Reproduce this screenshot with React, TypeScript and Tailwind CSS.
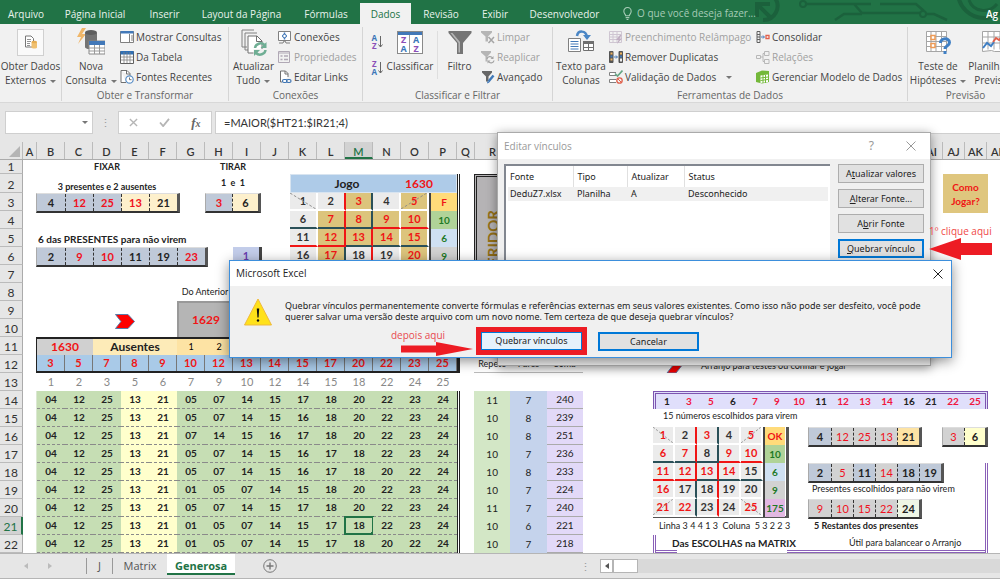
import type { ReactNode } from "react";
import clsx from "clsx";

const ui = "font-['Open_Sans','Noto_Sans',sans-serif]";
const dialogFont = "font-['Noto_Sans','Open_Sans',sans-serif]";
const calibri = "font-[Lato,'Noto_Sans',sans-serif]";

const tabs = [
  { label: "Arquivo", width: "w-[52px]" },
  { label: "Página Inicial", width: "w-[86px]" },
  { label: "Inserir", width: "w-[53px]" },
  { label: "Layout da Página", width: "w-[101px]" },
  { label: "Fórmulas", width: "w-[68px]" },
  { label: "Dados", width: "w-[51px]", active: true },
  { label: "Revisão", width: "w-[60px]" },
  { label: "Exibir", width: "w-[48px]" },
  { label: "Desenvolvedor", width: "w-[91px]" },
];

const leftColumns = "BCDEFGHIJKLMNOP".split("");
const rightColumns = ["AI", "AJ", "AK", "AL"];
const rowNumbers = Array.from({ length: 22 }, (_, i) => i + 1);

const drawn = [3, 5, 7, 8, 9, 10, 12, 13, 14, 15, 17, 20, 22, 23, 25];
const positions = [1, 2, 3, 5, 6, 7, 9, 10, 12, 14, 15, 18, 22, 24, 25];
const chosen = [1, 3, 5, 6, 7, 9, 10, 11, 12, 13, 14, 16, 21, 22, 25];
const firstColumn = [1, 6, 11, 16, 21];

const games = [
  "04 12 25 13 21 05 07 14 15 17 18 20 22 23 24",
  "04 12 25 13 21 05 07 14 15 16 18 20 22 23 24",
  "04 12 25 13 21 07 14 15 16 17 18 20 22 23 24",
  "04 12 25 13 21 05 07 14 15 16 17 18 22 23 24",
  "04 12 25 13 21 05 07 14 15 16 17 18 20 22 24",
  "04 12 25 13 21 01 05 07 14 15 18 20 22 23 24",
  "04 12 25 13 21 05 07 14 15 17 18 20 22 23 24",
  "04 12 25 13 21 01 05 07 14 15 17 18 22 23 24",
  "04 12 25 13 21 01 05 07 14 15 17 18 20 22 24",
].map((line) => line.split(" "));

const sums = [
  [11, 7, 240],
  [10, 8, 239],
  [10, 8, 251],
  [10, 7, 236],
  [10, 8, 233],
  [10, 7, 224],
  [11, 7, 240],
  [10, 6, 221],
  [10, 7, 218],
];

/* ---------- ribbon icons ---------- */

function IconSvg({ size, children }: { size: "sm" | "lg"; children: ReactNode }) {
  return size === "sm" ? (
    <svg viewBox="0 0 14 14" className="h-[14px] w-[14px] shrink-0" fill="none" aria-hidden="true">
      {children}
    </svg>
  ) : (
    <svg viewBox="0 0 28 28" className="h-7 w-7 shrink-0" fill="none" aria-hidden="true">
      {children}
    </svg>
  );
}

const ExternalIcon = () => (
  <span className="flex h-[27px] w-[27px] items-center justify-center border border-[#d0d0d0] bg-[#fafafa]">
    <svg viewBox="0 0 14 14" className="h-[14px] w-[14px]" fill="none" aria-hidden="true">
      <path d="M1.500 1h5.500l2.500 2.500V12h-8z" fill="#fff" stroke="#777" />
      <path d="M3 4.500h4M3 6.500h4M3 8.500h3M3 10.500h3" stroke="#777" strokeWidth=".8" />
      <path d="M7.500 7v5.500c0 1.300 5.500 1.300 5.500 0V7z" fill="#f0c070" />
      <ellipse cx="10.250" cy="7" rx="2.750" ry="1.200" fill="#e6ad52" />
    </svg>
  </span>
);

const QueryIcon = () => (
  <IconSvg size="lg">
    <path d="M5 0L0 9h4L1 16 9 6H5l4-6z" fill="#f0b76a" />
    <path d="M8 5v14c0 3 12 3 12 0V5z" fill="#737373" />
    <ellipse cx="14" cy="4.500" rx="6" ry="2.500" fill="#5e5e5e" />
    <path d="M12 13h16v13H12z" fill="#fff" stroke="#888" />
    <path d="M12 13h16v4H12z" fill="#4278b8" />
    <path d="M17.500 17v9M22.500 17v9M12 20h16M12 23h16" stroke="#999" />
  </IconSvg>
);

const ShowQueriesIcon = () => (
  <IconSvg size="sm">
    <path d="M.5 1.500h13v11H.5z" fill="#fff" stroke="#808080" />
    <path d="M.5 1h13v2.500H.5z" fill="#4278b8" />
    <path d="M9.500 4v8.500M11 6h2M11 8h2M11 10h2" stroke="#808080" />
  </IconSvg>
);

const TableIcon = () => (
  <IconSvg size="sm">
    <path d="M.5 1.500h13v12H.5z" fill="#fff" stroke="#606060" />
    <path d="M.5 1h13v3.500H.5z" fill="#2f6fb5" />
    <path d="M4 2v11M7 2v11M10 2v11M1 7h12M1 10h12" stroke="#808080" strokeWidth=".8" />
  </IconSvg>
);

const RecentIcon = () => (
  <IconSvg size="sm">
    <path d="M1 .5h6L10 3.500V6M6 12.500H1V.5" stroke="#707070" fill="#fff" />
    <path d="M6.500.5V4H10" stroke="#707070" />
    <circle cx="9.500" cy="9.500" r="3.700" fill="#fff" stroke="#5b8fc7" strokeWidth="1.200" />
    <path d="M9.500 7.500v2.200h2" stroke="#707070" />
  </IconSvg>
);

const RefreshAllIcon = () => (
  <IconSvg size="lg">
    <path d="M7 19H2V2h12M10 22H5V5h12" stroke="#808080" />
    <path d="M8 8h9l5 5v12H8z" fill="#fff" stroke="#707070" />
    <path d="M16.500 8v5.500H22" stroke="#707070" />
    <path d="M13.500 21h11v7h-11z" fill="#f1f1f1" />
    <path d="M15 20a5.500 5 0 0 1 9.500-3M25.500 22a5.500 5 0 0 1-9.500 3" stroke="#6fae94" strokeWidth="2.500" />
    <path d="M26.500 14v6h-6zM14 28v-6h6z" fill="#6fae94" />
  </IconSvg>
);

const ConnectionsIcon = () => (
  <IconSvg size="sm">
    <path d="M.5 1.500h12v9H.5z" fill="#fff" stroke="#808080" />
    <path d="M1 13h4l1-2h1l1 2h4" stroke="#808080" />
    <path d="M6.500 2.500v7M4 6h5" stroke="#4278b8" strokeWidth="1.500" />
    <circle cx="6.500" cy="6" r="1.800" fill="#fff" stroke="#4278b8" />
  </IconSvg>
);

const PropertiesIcon = () => (
  <IconSvg size="sm">
    <path d="M.5 1.500h11v11H.5z" stroke="#b0a8b5" />
    <path d="M.5 3h11" stroke="#b0a8b5" />
    <path d="M2.500 6h2M2.500 9.500h2M6 6h4M6 9.500h4" stroke="#b0a8b5" strokeWidth="1.500" />
  </IconSvg>
);

const EditLinksIcon = () => (
  <IconSvg size="sm">
    <path d="M4 12H2.500V1h5L10 3.500V7" stroke="#707070" fill="#fff" />
    <path d="M7 1v3h3" stroke="#707070" />
    <rect x="4.500" y="9.500" width="4.500" height="3" rx="1.500" stroke="#3f75b3" strokeWidth="1.200" fill="#fff" />
    <rect x="8.500" y="9.500" width="4.500" height="3" rx="1.500" stroke="#3f75b3" strokeWidth="1.200" />
  </IconSvg>
);

function SortIcon({ top, bottom, topColor, bottomColor }: { top: string; bottom: string; topColor: string; bottomColor: string }) {
  return (
    <span className="flex items-center gap-px">
      <span className="flex flex-col text-[8px] font-bold leading-[8px]">
        <span className={topColor}>{top}</span>
        <span className={bottomColor}>{bottom}</span>
      </span>
      <svg viewBox="0 0 5 14" className="h-[14px] w-[5px]" fill="none" aria-hidden="true">
        <path d="M2.500 1v11M.5 9.500l2 2.500 2-2.500" stroke="#666" />
      </svg>
    </span>
  );
}

const SortBigIcon = () => (
  <span className="flex h-7 items-center">
    <span className="flex h-[23px] w-[26px] flex-col border border-[#8a8a8a] bg-white">
      <span className="h-[3px] bg-[#4278b8]" />
      <span className="grid flex-1 grid-cols-2 items-center text-center text-[9px] font-bold leading-[9px]">
        <span className="border-r border-[#999] text-[#8b4fb8]">Z</span>
        <span className="text-[#3a76b8]">A</span>
        <span className="border-r border-[#999] text-[#3a76b8]">A</span>
        <span className="text-[#8b4fb8]">Z</span>
      </span>
    </span>
  </span>
);

const FilterIcon = () => (
  <IconSvg size="lg">
    <path d="M2.500 3h23v2L17 15v11h-6V15L2.500 5z" fill="#757575" />
    <path d="M12.500 15v9.500h1.500V14L6.500 5H4.500z" fill="#b5b5b5" />
  </IconSvg>
);

const ClearIcon = () => (
  <IconSvg size="sm">
    <path d="M0 1h11v1.500L7 6.500v5H4.500v-5L0 2.500z" fill="#b5b5b5" />
    <path d="M7.500 7l5.500 6M13 7l-5.500 6" stroke="#a5a5a5" strokeWidth="1.500" />
  </IconSvg>
);

const ReapplyIcon = () => (
  <IconSvg size="sm">
    <path d="M0 1h10v1.500L6.500 6.500v5H4.500v-5L0 2.500z" fill="#b5b5b5" />
    <path d="M6 9a3 3 0 0 1 5.500-1M13 10.500a3 3 0 0 1-5.500 1" stroke="#a5a5a5" strokeWidth="1.300" />
    <path d="M12.500 6v3h-3zM6.500 13.500v-3h3z" fill="#a5a5a5" />
  </IconSvg>
);

const AdvancedIcon = () => (
  <IconSvg size="sm">
    <path d="M1 1h10v1.500L7.500 6.500v5H5v-5L1 2.500z" fill="#666" />
    <path d="M12.500 5.500l-5 6" stroke="#3f78b8" strokeWidth="2.500" />
    <path d="M6 13.500l.5-2.500 2 1.500z" fill="#3f78b8" />
  </IconSvg>
);

const TextColumnsIcon = () => (
  <IconSvg size="lg">
    <path d="M1.500 10.500h12v13h-12z" fill="#fff" stroke="#808080" />
    <path d="M3.500 13.500h8M3.500 16h8M3.500 18.500h8M3.500 21h8" stroke="#4278b8" />
    <path d="M16.500 13.500h10v9h-10z" fill="#fff" stroke="#707070" />
    <path d="M16 13h11v3H16z" fill="#707070" />
    <path d="M21.500 16v6.500M16 19.500h11" stroke="#707070" />
    <path d="M10 8c1-6 9-6 10 1" stroke="#4a86c5" strokeWidth="2.500" />
    <path d="M16 7h8l-4 5z" fill="#4a86c5" />
  </IconSvg>
);

const FlashFillIcon = () => (
  <IconSvg size="sm">
    <path d="M.5 1.500h12v11H.5zM1 4.500h11M1 7h11M1 9.500h11M4 2v10M8 2v10" stroke="#cfc6d2" />
    <path d="M11 5L7 10h2.500L8 14l5-5.500h-2.500l2-3.500z" fill="#bfaec1" />
  </IconSvg>
);

const DuplicatesIcon = () => (
  <IconSvg size="sm">
    <path d="M.5 1.500h3.500v11H.5z" fill="#555" stroke="#555" />
    <path d="M1.500 2.500h2v2h-2zM1.500 8.500h2v2h-2z" fill="#f0b25e" />
    <path d="M1.500 5.500h2v2h-2z" fill="#4278b8" />
    <path d="M5 7h3M7 5.500L8.500 7 7 8.500" stroke="#4278b8" />
    <path d="M10 1.500h3.500v11H10z" fill="#555" stroke="#555" />
    <path d="M11 2.500h2v2h-2z" fill="#f0b25e" />
    <path d="M11 5.500h2v2h-2z" fill="#4278b8" />
    <path d="M11 8.500h2v3h-2z" fill="#eee" />
  </IconSvg>
);

const ValidationIcon = () => (
  <IconSvg size="sm">
    <path d="M7 2.500H.5v3H7M7 9.500H.5v3H7" stroke="#808080" fill="#fff" />
    <path d="M6 3.500L8.500 6 13.500.5" stroke="#64a584" strokeWidth="1.600" />
    <circle cx="10.500" cy="10.500" r="2.700" stroke="#e0604c" strokeWidth="1.300" />
    <path d="M8.800 8.800l3.500 3.500" stroke="#e0604c" />
  </IconSvg>
);

const ConsolidateIcon = () => (
  <IconSvg size="sm">
    <path d="M1 1.500h3v11H1zM1 4.500h3M1 7h3M1 9.500h3" stroke="#606060" />
    <path d="M5 7h3M7 5.500L8.500 7 7 8.500" stroke="#4278b8" />
    <path d="M10 5.500h3v3h-3z" fill="#fff" stroke="#e0604c" strokeWidth="1.300" />
  </IconSvg>
);

const RelationsIcon = () => (
  <IconSvg size="sm">
    <path d="M.5 5.500h4v3h-4zM8.500 1.500h4.500v4H8.500zM8.500 9.500h4.500v4H8.500zM4.500 7h2.500M8.500 3.500H7v8h1.500" stroke="#b8b8b8" />
  </IconSvg>
);

const ModelIcon = () => (
  <IconSvg size="sm">
    <path d="M0 3l6-2.500L13 1v11l-7 1.500L0 12z" fill="#74b83a" />
    <path d="M4.500 5.500L12 4.500v7.500l-7.500 1z" fill="#fff" />
    <path d="M7 5v8M9.500 5v8M4.500 8l7.500-1M4.500 10.500l7.500-1" stroke="#74b83a" />
  </IconSvg>
);

const WhatIfIcon = () => (
  <IconSvg size="lg">
    <path d="M2.500 3.500h20v20h-20zM7 3.500v20M12 3.500v20M17.500 3.500v20M2.500 8.500h20M2.500 13.500h20M2.500 18.500h20" stroke="#a5a5a5" fill="#fff" />
    <path d="M7 7.500h4v4H7zM7 15.500h4v4H7z" stroke="#ee9b56" fill="#fff" strokeWidth="1.500" />
    <path d="M16.500 15c0-5.500 9-5.500 9-.5 0 3.500-4.500 3-4.500 6.500" stroke="#3f7fc4" strokeWidth="3" />
    <path d="M19.500 23h3v3h-3z" fill="#3f7fc4" />
  </IconSvg>
);

const ForecastIcon = () => (
  <IconSvg size="lg">
    <path d="M2.500 3.500h24v17l-4 3h-8l-3-1-9 1zM8 3.500v18M14 3.500v18M20 3.500v18M2.500 9h24M2.500 15h24" stroke="#a5a5a5" fill="#fff" />
    <path d="M3 20l4-5 4 3 3-4" stroke="#3f7fc4" strokeWidth="2" />
    <path d="M13 14l3-4 3 2 7-7" stroke="#e0604c" strokeWidth="2" />
  </IconSvg>
);

/* ---------- ribbon ---------- */

const Caret = () => <span className="ml-1 inline-block border-x-[3px] border-t-[3px] border-x-transparent border-t-[#777] align-middle" />;

function BigButton({ icon, lines, menu, width }: { icon: ReactNode; lines: string[]; menu?: boolean; width: string }) {
  return (
    <button type="button" className={clsx("flex shrink-0 flex-col items-center whitespace-nowrap", width)}>
      <span className="mb-0.5 flex h-[30px] items-center">{icon}</span>
      {lines.map((line, i) => (
        <span key={line} className="block leading-[14px]">
          {line}
          {menu && i === lines.length - 1 && <Caret />}
        </span>
      ))}
    </button>
  );
}

function SmallButton({ icon, label, disabled, menu }: { icon: ReactNode; label: string; disabled?: boolean; menu?: boolean }) {
  return (
    <button
      type="button"
      disabled={disabled}
      className={clsx("flex h-5 items-center gap-0.5 whitespace-nowrap", disabled && "text-[#a0a0a0]")}
    >
      {icon}
      {label}
      {menu && <span className="ml-1"><Caret /></span>}
    </button>
  );
}

function Group({ label, width, children }: { label?: string; width: string; children: ReactNode }) {
  return (
    <div className={clsx("flex h-[74px] shrink-0 flex-col justify-between border-r border-[#d5d5d5]", width)}>
      <div className="flex h-[61px] items-start">{children}</div>
      <div className="h-3 text-center leading-3 text-[#666]">{label}</div>
    </div>
  );
}

function Ribbon() {
  return (
    <div className="flex h-[79px] overflow-hidden border-b border-[#d8d8d8] bg-[#f1f1f1] pt-[3px] text-[10px] text-[#444]">
      <Group width="w-[62px]">
        <BigButton width="w-full" icon={<ExternalIcon />} lines={["Obter Dados", "Externos"]} menu />
      </Group>
      <Group width="w-[167px]" label="Obter e Transformar">
        <BigButton width="w-[58px]" icon={<QueryIcon />} lines={["Nova", "Consulta"]} menu />
        <div className="flex flex-col">
          <SmallButton icon={<ShowQueriesIcon />} label="Mostrar Consultas" />
          <SmallButton icon={<TableIcon />} label="Da Tabela" />
          <SmallButton icon={<RecentIcon />} label="Fontes Recentes" />
        </div>
      </Group>
      <Group width="w-[134px]" label="Conexões">
        <BigButton width="w-[49px]" icon={<RefreshAllIcon />} lines={["Atualizar", "Tudo"]} menu />
        <div className="flex flex-col">
          <SmallButton icon={<ConnectionsIcon />} label="Conexões" />
          <SmallButton icon={<PropertiesIcon />} label="Propriedades" disabled />
          <SmallButton icon={<EditLinksIcon />} label="Editar Links" />
        </div>
      </Group>
      <Group width="w-[190px]" label="Classificar e Filtrar">
        <div className="flex w-5 flex-col items-end gap-2.5 pt-[7px]">
          <button type="button" aria-label="Classificar de A a Z">
            <SortIcon top="A" bottom="Z" topColor="text-[#3a76b8]" bottomColor="text-[#8b4fb8]" />
          </button>
          <button type="button" aria-label="Classificar de Z a A">
            <SortIcon top="Z" bottom="A" topColor="text-[#8b4fb8]" bottomColor="text-[#3a76b8]" />
          </button>
        </div>
        <BigButton width="w-[54px]" icon={<SortBigIcon />} lines={["Classificar"]} />
        <span className="mt-1 h-12 border-l border-[#dedede]" />
        <BigButton width="w-[43px]" icon={<FilterIcon />} lines={["Filtro"]} />
        <div className="flex flex-col">
          <SmallButton icon={<ClearIcon />} label="Limpar" disabled />
          <SmallButton icon={<ReapplyIcon />} label="Reaplicar" disabled />
          <SmallButton icon={<AdvancedIcon />} label="Avançado" />
        </div>
      </Group>
      <Group width="w-[355px]" label="Ferramentas de Dados">
        <BigButton width="w-[56px]" icon={<TextColumnsIcon />} lines={["Texto para", "Colunas"]} />
        <div className="flex w-[147px] flex-col">
          <SmallButton icon={<FlashFillIcon />} label="Preenchimento Relâmpago" disabled />
          <SmallButton icon={<DuplicatesIcon />} label="Remover Duplicatas" />
          <SmallButton icon={<ValidationIcon />} label="Validação de Dados" menu />
        </div>
        <div className="flex flex-col">
          <SmallButton icon={<ConsolidateIcon />} label="Consolidar" />
          <SmallButton icon={<RelationsIcon />} label="Relações" disabled />
          <SmallButton icon={<ModelIcon />} label="Gerenciar Modelo de Dados" />
        </div>
      </Group>
      <Group width="w-[116px]" label="Previsão">
        <BigButton width="w-[60px]" icon={<WhatIfIcon />} lines={["Teste de", "Hipóteses"]} menu />
        <BigButton width="w-[52px]" icon={<ForecastIcon />} lines={["Planilha de", "Previsão"]} />
      </Group>
    </div>
  );
}

function TitleTabs() {
  return (
    <header className="relative flex h-6 items-end overflow-hidden bg-[#217346] text-[10px] text-[#e8f2ec]">
      <svg viewBox="0 0 245 24" className="absolute right-0 top-0 h-6 w-[245px]" fill="none" stroke="#1b613c" aria-hidden="true">
        <path d="M8 20A14 14 0 0 0 20-2" strokeWidth="4" />
        <path d="M2 17V4h13M3 5l12 12" strokeWidth="4" />
        <circle cx="48" cy="4" r="3" strokeWidth="2" />
        <path d="M51 4h48l8 9h58M80 20l9-6h18M171 14h8l13 6M98 4h18M125 4h36l8 7" strokeWidth="2.500" />
        <circle cx="168" cy="14" r="3" strokeWidth="2" />
        <circle cx="229" cy="-8" r="26" strokeWidth="4" />
        <path d="M214 0c4 12 20 14 28 4" strokeWidth="3" />
      </svg>
      {tabs.map((tab) => (
        <button
          key={tab.label}
          type="button"
          className={clsx(
            "relative h-[21px] shrink-0 whitespace-nowrap text-center leading-[20px]",
            tab.width,
            tab.active && "bg-[#f1f1f1] text-[#217346]",
          )}
        >
          {tab.label}
        </button>
      ))}
      <label className="relative ml-3 flex h-[21px] shrink-0 items-center text-[#a6cbb6]">
        <svg viewBox="0 0 12 14" className="mr-1 h-[13px] w-[11px]" fill="none" stroke="#a6cbb6" aria-hidden="true">
          <path d="M4 9.500C4 8 2 7 2 4.500a4 4 0 0 1 8 0C10 7 8 8 8 9.500zM4 11.500h4M5 13.500h2" strokeWidth="1.200" />
        </svg>
        <input type="text" placeholder="O que você deseja fazer..." className="w-[120px] bg-transparent outline-none placeholder:text-[#a6cbb6]" />
      </label>
      <span className="relative ml-auto w-[14px] shrink-0 overflow-hidden whitespace-nowrap text-[10px] font-semibold leading-[20px] text-white">Ag</span>
    </header>
  );
}

function FormulaBar() {
  return (
    <div className="flex items-center bg-[#e6e6e6] py-2 pl-[5px] text-[11px]">
      <label className="flex h-[23px] w-[88px] shrink-0 items-center border border-[#cfcfcf] bg-white pr-1">
        <input type="text" aria-label="Caixa de nome" className="w-0 flex-1 outline-none" />
        <Caret />
      </label>
      <span className="w-[25px] shrink-0 text-center leading-none text-[#999]">⋮</span>
      <div className="flex h-[23px] w-[94px] shrink-0 items-center justify-around border border-[#cfcfcf] bg-white">
        <button type="button" aria-label="Cancelar entrada">
          <svg viewBox="0 0 10 10" className="h-[9px] w-[9px]" stroke="#b5b5b5" strokeWidth="1.500"><path d="M1 1l8 8M9 1L1 9" /></svg>
        </button>
        <button type="button" aria-label="Confirmar entrada">
          <svg viewBox="0 0 12 10" className="h-[9px] w-[11px]" fill="none" stroke="#b5b5b5" strokeWidth="2"><path d="M1 5l3.500 4L11 1" /></svg>
        </button>
        <button type="button" className="font-['Liberation_Serif',serif] text-[13px] font-bold italic leading-none text-[#666]">
          f<span className="text-[10px]">x</span>
        </button>
      </div>
      <input
        type="text"
        aria-label="Barra de fórmulas"
        defaultValue="=MAIOR($HT21:$IR21;4)"
        className={clsx(calibri, "ml-[3px] h-[23px] min-w-0 flex-1 border border-r-0 border-[#cfcfcf] bg-white px-2 text-[11px] text-[#333] outline-none")}
      />
    </div>
  );
}

/* ---------- sheet ---------- */

function ColumnHead({ label, width, active }: { label: string; width: string; active?: boolean }) {
  return (
    <span
      className={clsx(
        "shrink-0 overflow-hidden border-r text-center",
        width,
        active ? "border-b-2 border-b-[#217346] border-r-[#bbb] bg-[#d2d2d2] text-[#217346]" : "border-[#bbb]",
      )}
    >
      {label}
    </span>
  );
}

function ColumnHeads() {
  return (
    <div className="flex h-[18px] overflow-hidden border-b border-[#ababab] bg-[#e6e6e6] text-[11px] font-semibold leading-[20px] text-[#333]">
      <span className="flex w-[23px] shrink-0 items-end justify-end border-r border-[#bbb] p-0.5">
        <svg viewBox="0 0 10 10" className="h-[11px] w-[11px]" aria-hidden="true"><path d="M10 0v10H0z" fill="#b5b5b5" /></svg>
      </span>
      <ColumnHead label="A" width="w-[14px]" />
      {leftColumns.map((label) => (
        <ColumnHead key={label} label={label} width="w-7" active={label === "M"} />
      ))}
      <ColumnHead label="Q" width="w-[18px]" />
      <ColumnHead label="R" width="w-9" />
      <span className="w-[410px] shrink-0" />
      {rightColumns.map((label) => (
        <ColumnHead key={label} label={label} width="w-[22px]" />
      ))}
    </div>
  );
}

function RowHeads() {
  return (
    <div className="flex w-[23px] shrink-0 flex-col bg-[#e6e6e6] text-center text-[12px] text-[#333]">
      {rowNumbers.map((n) => (
        <span
          key={n}
          className={clsx(
            "border-b border-b-[#bbb]",
            n === 1 ? "h-[14px] leading-[13px]" : n === 2 ? "h-[19px] leading-[21px]" : "h-[18px] leading-[19px]",
            n === 21 ? "border-r-2 border-r-[#217346] bg-[#d2d2d2] text-[#217346]" : "border-r border-r-[#ababab]",
          )}
        >
          {n}
        </span>
      ))}
    </div>
  );
}

type StripCell = [value: number, bg: string, red?: boolean];

function Strip({ cells, cellWidth, light }: { cells: StripCell[]; cellWidth: string; light?: boolean }) {
  return (
    <div className="flex h-5 shrink-0 border-b-2 border-l border-r-[3px] border-t border-b-[#333] border-l-[#aaa] border-r-[#555] border-t-[#ddd]">
      {cells.map(([value, bg, red], i) => (
        <span
          key={i}
          className={clsx(
            "text-center leading-[17px]",
            cellWidth,
            bg,
            red ? "text-[#f01020]" : "text-[#222]",
            red && light ? "font-normal" : "font-bold",
            i > 0 && "border-l border-dashed border-[#333]",
          )}
        >
          {value}
        </span>
      ))}
    </div>
  );
}

function Diagonal({ down }: { down: boolean }) {
  return (
    <svg viewBox="0 0 28 18" preserveAspectRatio="none" className="absolute inset-0 h-full w-full" aria-hidden="true">
      <path d={down ? "M0 0L28 18" : "M0 18L28 0"} stroke="#888" strokeDasharray="3 2" />
    </svg>
  );
}

function rightEdge(row: number, col: number) {
  if (col === 1) return row < 3 ? "border-r-[#f01515]" : "border-r-[#2a5058]";
  if (col === 2) return row < 2 ? "border-r-[#2a5058]" : "border-r-[#f01515]";
  return "border-r-white";
}

function bottomEdge(row: number, col: number) {
  if (row === 1) return col < 3 ? "border-b-[#2a5058]" : "border-b-[#f01515]";
  if (row === 2) return col < 2 ? "border-b-[#f01515]" : "border-b-[#2a5058]";
  return "border-b-white";
}

const sideColors = [
  "bg-[#ffdb7a] text-[#f01515]",
  "bg-[#b0d398] text-[#1e7a26]",
  "bg-[#cfe0f2] text-[#1e7a26]",
  "bg-[#d2d2d2] text-[#1e7a26]",
  "bg-[#e2b8e2] text-[#1e7a26]",
];

function Matrix({ marked, side, cellWidth, filled }: { marked: number[]; side: string[]; cellWidth: string; filled?: boolean }) {
  return (
    <table className="table-fixed border-separate border-spacing-0 text-center font-bold">
      <tbody>
        {side.map((label, row) => (
          <tr key={row} className="h-[18px]">
            {[0, 1, 2, 3, 4].map((col) => {
              const value = row * 5 + col + 1;
              const hit = marked.includes(value);
              const corner = (row === 0 || row === 4) && (col === 0 || col === 4);
              return (
                <td
                  key={col}
                  className={clsx(
                    "relative border-b-2 border-r-2 p-0 leading-4",
                    cellWidth,
                    rightEdge(row, col),
                    bottomEdge(row, col),
                    hit ? "text-[#f01515]" : "text-[#333]",
                    hit && filled ? "bg-[#dcc47c]" : "bg-[#ebebeb]",
                  )}
                >
                  {value}
                  {corner && <Diagonal down={(row === 0) === (col === 0)} />}
                </td>
              );
            })}
            <td className={clsx("border-l-2 border-l-[#444] p-0 text-[10px] leading-4", cellWidth, sideColors[row])}>{label}</td>
          </tr>
        ))}
      </tbody>
    </table>
  );
}

const slate = "bg-[#bfc9d8]";
const cream = "bg-[#fdf0cc]";
const silver = "bg-[#d2d2d2]";

function LeftSheet() {
  return (
    <div className="ml-[13px] w-[424px] shrink-0">
      <div className="flex h-[177px]">
        <div className="w-[254px] shrink-0 text-[9px] font-bold text-[#222]">
          <div className="flex h-[14px] leading-[14px]">
            <span className="w-[142px] text-center">FIXAR</span>
            <span className="ml-[27px] w-14 text-center">TIRAR</span>
          </div>
          <div className="flex h-[19px]">
            <span className="w-[142px] text-center leading-[25px]">3 presentes e 2 ausentes</span>
            <span className="ml-[27px] w-14 whitespace-pre text-center leading-[18px]">1  e  1</span>
          </div>
          <div className="flex h-9 gap-[25px] text-[11px]">
            <Strip cellWidth="w-7" cells={[[4, slate], [12, slate, true], [25, slate, true], [13, cream, true], [21, cream]]} />
            <Strip cellWidth="w-[26px]" cells={[[3, slate, true], [6, cream]]} />
          </div>
          <div className="h-[18px] whitespace-nowrap pl-0.5 text-[10px] leading-[20px]">6 das PRESENTES para não virem</div>
          <div className="flex h-9 gap-[25px] text-[11px]">
            <Strip cellWidth="w-7" cells={[[2, slate], [9, slate, true], [10, slate, true], [11, slate], [19, slate], [23, slate, true]]} />
            <span className="h-5 w-[29px] border-b-2 border-r-[3px] border-[#444] bg-[#c3cdea] text-center leading-[17px] text-[#6a3db0]">1</span>
          </div>
          <div className="flex h-[18px]">
            <span className="ml-[141px] w-14 whitespace-nowrap text-center font-normal leading-[18px]">Do Anterior</span>
          </div>
          <div className="flex h-9 items-center">
            <svg viewBox="0 0 20 15" className="ml-[79px] mt-1 h-[15px] w-5" aria-hidden="true">
              <path d="M.5.5H13l6.500 7L13 14.500H.5L6 7.500z" fill="#f00" stroke="#5b7ba8" />
            </svg>
            <span className="ml-[42px] h-9 w-14 border-l-2 border-t-2 border-[#999] bg-[#b5b5b5] text-center text-[12px] leading-[34px] text-[#f01515]">
              1629
            </span>
          </div>
        </div>
        <div className="mt-[14px] h-[92px] w-[170px] border-r-[3px] border-double border-[#222] text-[11px]">
          <div className="flex h-[19px] border border-[#d8e4f0] bg-[#aecbe8] text-center text-[12px] font-bold leading-[18px]">
            <span className="w-28 text-[#222]">Jogo</span>
            <span className="w-8 text-[#f01515]">1630</span>
          </div>
          <Matrix marked={drawn} side={["F", "10", "6", "9"]} cellWidth="w-7" filled />
        </div>
      </div>

      <table className="table-fixed border-separate border-spacing-0 border-2 border-l border-r-[3px] border-[#222] text-center font-bold">
        <tbody>
          <tr className="h-4 text-[12px] leading-4">
            <td colSpan={2} className="bg-[#d0d0d0] p-0 text-[#f01515]">1630</td>
            <td colSpan={3} className="bg-[#fdebb8] p-0 text-[#222]">Ausentes</td>
            {[1, 2, 3, 4, 5, 6, 7, 8, 9, 10].map((n) => (
              <td key={n} className="w-7 bg-[#fde3a4] p-0 text-[9px] font-normal">{n}</td>
            ))}
          </tr>
          <tr className="h-4 text-[11px] leading-4">
            {drawn.map((n) => (
              <td key={n} className="w-7 border-r border-[#777] bg-[#a9cae8] p-0 text-[#f01515]">{n}</td>
            ))}
          </tr>
        </tbody>
      </table>
      <div className="flex h-[18px] pl-px text-[11px] leading-[18px] text-[#888]">
        {positions.map((n, i) => (
          <span key={i} className="w-7 text-center">{n}</span>
        ))}
      </div>
      <table className="table-fixed border-separate border-spacing-0 border-l border-r-[3px] border-double border-l-[#dbe8d2] border-r-[#222] text-center text-[10px] font-bold text-[#222]">
        <tbody>
          {games.map((game, row) => (
            <tr key={row} className="h-[18px] leading-[17px]">
              {game.map((n, col) => (
                <td
                  key={col}
                  className={clsx(
                    "relative w-7 border-b border-dashed border-[#8a8a8a] p-0",
                    col === 3 || col === 4 ? "bg-[#ffffcc]" : "bg-[#c6deb4]",
                  )}
                >
                  {n}
                  {row === 7 && col === 11 && (
                    <span className="absolute -inset-px border-2 border-[#217346]">
                      <span className="absolute -bottom-1 -right-1 h-[5px] w-[5px] bg-[#217346]" />
                    </span>
                  )}
                </td>
              ))}
            </tr>
          ))}
        </tbody>
      </table>
    </div>
  );
}

function MiddleSheet() {
  return (
    <div className="ml-[14px] w-[109px] shrink-0 pt-[14px] text-center">
      <div className="flex h-[181px] overflow-hidden border-l-[3px] border-t-[3px] border-double border-[#222] bg-[#b5b3b5] pl-2 pt-[33px] text-[15px] font-bold leading-4 text-[#947018]">
        <span className="rotate-180 self-start [writing-mode:vertical-rl]">CONFERIDOR</span>
      </div>
      <table className="w-full table-fixed border-separate border-spacing-0 text-[10px] text-[#222]">
        <thead>
          <tr className="h-[18px] text-[9px] leading-[17px]">
            {["Repete", "Pares", "Soma"].map((label) => (
              <th key={label} className="border-b border-[#bbb] p-0 font-normal">{label}</th>
            ))}
          </tr>
        </thead>
        <tbody>
          <tr className="h-[18px]"><td colSpan={3} className="p-0" /></tr>
          {sums.map(([repeat, even, sum], i) => (
            <tr key={i} className="h-[18px] leading-[17px]">
              <td className="bg-[#d3e7c6] p-0">{repeat}</td>
              <td className="bg-[#c5d3ec] p-0">{even}</td>
              <td className="border-b border-[#aaa] bg-[#e2d9f8] p-0">{sum}</td>
            </tr>
          ))}
        </tbody>
      </table>
    </div>
  );
}

function RightSheet() {
  return (
    <div className="ml-[70px] w-[335px] shrink-0 text-[11px] text-[#222]">
      <div className="flex h-[195px] items-start justify-end pt-[14px]">
        <button type="button" className="h-[39px] w-[45px] bg-[#dfc67e] text-center text-[10px] font-bold leading-[14px] text-[#f01515]">
          Como Jogar?
        </button>
      </div>
      <div className="flex h-[36px] items-start text-[9px]">
        <svg viewBox="0 0 18 18" className="ml-3 h-[18px] w-[18px]" aria-hidden="true">
          <path d="M2 18l7-9-7-9h9l7 9-7 9z" fill="#f00" stroke="#5b7ba8" />
        </svg>
        <span className="ml-[18px] leading-[22px]">Arranjo para testes ou confiar e jogar</span>
      </div>
      <div className="flex h-[18px] border-[3px] border-b-0 border-double border-[#7d55b0] bg-[#e0dffb] text-[10px] font-bold leading-[14px]">
        {chosen.map((n) => (
          <span key={n} className={clsx("w-[22px] shrink-0 text-center", firstColumn.includes(n) ? "text-[#222]" : "text-[#f01540]")}>
            {n}
          </span>
        ))}
      </div>
      <div className="h-[18px] pl-[10px] text-[9px] leading-[14px]">15 números escolhidos para virem</div>
      <div className="flex h-[90px]">
        <div className="h-[91px] w-[136px] shrink-0 border-b-2 border-r-[3px] border-[#555]">
          <Matrix marked={chosen} side={["OK", "10", "6", "9", "175"]} cellWidth="w-[22px]" />
        </div>
        <div className="ml-[19px] flex flex-1 flex-col">
          <div className="flex h-9 justify-between">
            <Strip light cellWidth="w-[22px]" cells={[[4, slate], [12, silver, true], [25, silver, true], [13, silver, true], [21, "bg-[#fde3a4]"]]} />
            <Strip light cellWidth="w-[21px]" cells={[[3, silver, true], [6, "bg-[#ffffcc]"]]} />
          </div>
          <div className="flex h-9 flex-col items-start border-r-[3px] border-double border-[#8a60b8]">
            <Strip light cellWidth="w-[22px]" cells={[[2, slate], [5, silver, true], [11, slate], [14, silver, true], [18, slate], [19, slate]]} />
            <span className="pl-1 text-[9px] leading-[12px]">Presentes escolhidos para não virem</span>
          </div>
          <div className="flex h-[18px] items-start border-r-[3px] border-double border-[#8a60b8]">
            <Strip light cellWidth="w-[22px]" cells={[[9, silver, true], [10, silver, true], [15, silver, true], [22, silver, true], [24, "bg-[#eef6e6]"]]} />
          </div>
        </div>
      </div>
      <div className="flex h-[18px] border-r-[3px] border-double border-[#8a60b8] text-[9px] leading-[18px]">
        <span className="w-[161px] whitespace-pre pl-1.5">Linha 3 4 4 1 3  Coluna  5 3 2 2 3</span>
        <span className="font-bold">5 Restantes dos presentes</span>
      </div>
      <div className="border-x-[3px] border-double border-[#8a60b8]">
        <div className="flex h-[15px] leading-[16px]">
          <span className="w-[193px] pl-4 text-[10px] font-bold">Das ESCOLHAS na MATRIX</span>
          <span className="text-[9px]">Útil para balancear o Arranjo</span>
        </div>
        <div className="flex h-[3px] justify-between">
          <span className="w-[21px] border-b-[3px] border-double border-[#8a60b8]" />
          <span className="w-[198px] border-b-[3px] border-double border-[#8a60b8]" />
        </div>
      </div>
    </div>
  );
}

function SheetTabs() {
  return (
    <footer className="flex h-[26px] items-stretch border-y border-[#b5b5b5] bg-[#e6e6e6] text-[11px] text-[#555]">
      <div className="flex w-[86px] shrink-0 items-center gap-5 pl-6">
        <button type="button" aria-label="Anterior" className="h-0 w-0 border-y-[3px] border-r-4 border-y-transparent border-r-[#bbb]" />
        <button type="button" aria-label="Próxima" className="h-0 w-0 border-y-[3px] border-l-4 border-y-transparent border-l-[#bbb]" />
      </div>
      <button type="button" className="my-1 w-[27px] shrink-0 border-x border-[#999]">J</button>
      <button type="button" className="w-[54px] shrink-0">Matrix</button>
      <button type="button" className="mb-[3px] w-[68px] shrink-0 border-b-2 border-[#217346] bg-white pt-1 font-bold text-[#217346]">Generosa</button>
      <button type="button" aria-label="Nova planilha" className="ml-7 shrink-0">
        <svg viewBox="0 0 14 14" className="h-[14px] w-[14px]" fill="none" stroke="#777" aria-hidden="true">
          <circle cx="7" cy="7" r="6.300" />
          <path d="M7 3.500v7M3.500 7h7" strokeWidth="1.400" />
        </svg>
      </button>
      <span className="ml-[303px] self-center leading-none text-[#999]">⋮</span>
      <div className="my-[5px] ml-[9px] flex flex-1 bg-[#d9d9d9]">
        <button type="button" aria-label="Rolar para a esquerda" className="flex w-[13px] items-center justify-center border border-[#b5b5b5] bg-white">
          <span className="border-y-[3px] border-r-4 border-y-transparent border-r-[#555]" />
        </button>
        <span className="w-[25px] border border-[#b5b5b5] bg-white" />
      </div>
    </footer>
  );
}

/* ---------- dialogs ---------- */

const CloseIcon = ({ color }: { color: string }) => (
  <svg viewBox="0 0 10 10" className={clsx("h-[10px] w-[10px]", color)} stroke="currentColor" aria-hidden="true">
    <path d="M.5.5l9 9M9.500.5l-9 9" />
  </svg>
);

function LinkButton({ before, hotkey, after, active }: { before?: string; hotkey: string; after: string; active?: boolean }) {
  return (
    <button
      type="button"
      className={clsx(
        "h-[19px] whitespace-nowrap bg-[#e1e1e1] text-center leading-none",
        active ? "border-2 border-[#0078d7]" : "border border-[#adadad]",
      )}
    >
      {before}
      <u>{hotkey}</u>
      {after}
    </button>
  );
}

function EditLinksDialog() {
  return (
    <section
      role="dialog"
      aria-label="Editar vínculos"
      className={clsx(dialogFont, "absolute left-[497px] top-[132px] flex h-[234px] w-[434px] flex-col border border-[#aaa] bg-[#f0f0f0] text-[9px] text-[#222] shadow-[0_2px_10px_rgba(0,0,0,0.4)]")}
    >
      <div className="flex h-[26px] items-center bg-white pl-1.5 pr-[14px] text-[#999]">
        <h2 className={clsx(ui, "flex-1 text-[10px]")}>Editar vínculos</h2>
        <button type="button" className="mr-8 text-[12px]">?</button>
        <button type="button" aria-label="Fechar"><CloseIcon color="text-[#999]" /></button>
      </div>
      <div className="flex flex-1 gap-2 px-1.5 pt-[5px]">
        <div className="mb-2 flex-1 border-l-2 border-t-2 border-[#828790] bg-white px-0.5">
          <table className="w-full table-fixed text-left">
            <thead>
              <tr className="h-[21px]">
                <th className="w-[65px] border-r border-[#e0e0e0] p-0 pl-0.5 font-normal">Fonte</th>
                <th className="w-[54px] border-r border-[#e0e0e0] p-0 pl-1 font-normal">Tipo</th>
                <th className="w-[57px] border-r border-[#e0e0e0] p-0 pl-1 font-normal">Atualizar</th>
                <th className="p-0 pl-1 font-normal">Status</th>
              </tr>
            </thead>
            <tbody>
              <tr className="h-[14px] bg-[#f0f0f0]">
                <td className="p-0 pl-0.5">DeduZ7.xlsx</td>
                <td className="p-0 pl-1">Planilha</td>
                <td className="p-0 pl-1">A</td>
                <td className="p-0 pl-1">Desconhecido</td>
              </tr>
            </tbody>
          </table>
        </div>
        <div className="flex w-[86px] flex-col gap-[6px]">
          <LinkButton before="A" hotkey="t" after="ualizar valores" />
          <LinkButton hotkey="A" after="lterar Fonte..." />
          <LinkButton before="A" hotkey="b" after="rir Fonte" />
          <LinkButton hotkey="Q" after="uebrar vínculo" active />
        </div>
      </div>
    </section>
  );
}

function BreakLinksDialog() {
  return (
    <section
      role="dialog"
      aria-label="Microsoft Excel"
      className={clsx(dialogFont, "absolute left-[229px] top-[260px] flex h-[98px] w-[723px] flex-col border border-[#3d8fdc] bg-[#f0f0f0] text-[9px] text-[#222] shadow-[0_3px_12px_rgba(0,0,0,0.45)]")}
    >
      <div className="flex h-[25px] items-center justify-between bg-white pl-1.5 pr-2">
        <h2 className={clsx(ui, "text-[10px]")}>Microsoft Excel</h2>
        <button type="button" aria-label="Fechar"><CloseIcon color="text-[#222]" /></button>
      </div>
      <div className="flex gap-[13px] pl-[14px] pt-[12px]">
        <svg viewBox="0 0 28 28" className="h-7 w-7 shrink-0" aria-hidden="true">
          <path d="M14 1L27.500 27H.5z" fill="#ffe11a" stroke="#efb93c" />
          <path d="M12.800 10.500h2.400l-.6 9h-1.200z" fill="#111" />
          <circle cx="14" cy="22.500" r="1.200" fill="#111" />
        </svg>
        <p className="pt-0.5 leading-[11px]">
          Quebrar vínculos permanentemente converte fórmulas e referências externas em seus valores existentes. Como isso não pode ser desfeito, você pode
          <br />
          querer salvar uma versão deste arquivo com um novo nome. Tem certeza de que deseja quebrar vínculos?
        </p>
      </div>
      <div className="flex items-center gap-[11px] pl-[246px] pt-px">
        <span className="border-[5px] border-[#ed1c24]">
          <button type="button" className="block h-[18px] w-[101px] border border-[#0078d7] bg-[#e5f1fb]">Quebrar vínculos</button>
        </span>
        <button type="button" className="h-[19px] w-[101px] border-2 border-[#0078d7] bg-[#e1e1e1] leading-none">Cancelar</button>
      </div>
    </section>
  );
}

function Annotations() {
  return (
    <>
      <div className="absolute left-[929px] top-[224px] text-[10px] leading-[14px] text-[#f04848]">
        <p className="whitespace-nowrap">1º clique aqui</p>
        <svg viewBox="0 0 63 22" className="h-[22px] w-[63px]" aria-hidden="true">
          <path d="M0 11L32 0v5h31v12H32v5z" fill="#ed1c24" />
        </svg>
      </div>
      <div className="absolute left-[391px] top-[329px] text-[10px] leading-[13px] text-[#e84a50]">
        <p className="whitespace-nowrap">depois aqui</p>
        <svg viewBox="0 0 72 14" className="ml-[10px] h-[14px] w-[72px]" aria-hidden="true">
          <path d="M72 7L35 0v3.500H0v7h35V14z" fill="#ed1c24" />
        </svg>
      </div>
    </>
  );
}

function App() {
  return (
    <div className={clsx(ui, "relative w-full overflow-hidden bg-white")}>
      <TitleTabs />
      <Ribbon />
      <FormulaBar />
      <main className={calibri}>
        <ColumnHeads />
        <div className="flex h-[393px] overflow-hidden">
          <RowHeads />
          <LeftSheet />
          <MiddleSheet />
          <RightSheet />
        </div>
      </main>
      <SheetTabs />
      <EditLinksDialog />
      <BreakLinksDialog />
      <Annotations />
    </div>
  );
}

export default App;
